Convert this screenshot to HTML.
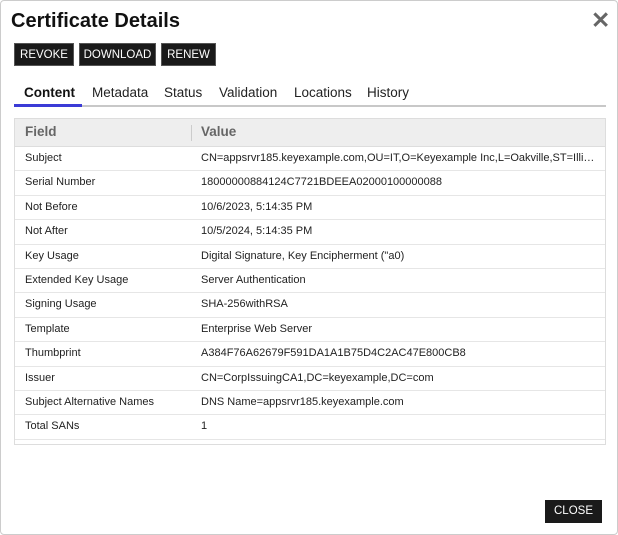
<!DOCTYPE html>
<html><head><style>
body{margin:0;width:618px;height:535px;background:#fff;font-family:"Liberation Sans",Arial,sans-serif;overflow:hidden}
.dlg{position:absolute;left:0;top:0;width:616px;height:533px;border:1px solid #ccc;border-radius:4px;background:#fff}
h1{position:absolute;left:10px;top:9px;margin:0;font-size:20px;font-weight:bold;color:#111}
.x{position:absolute;left:590px;top:6px;font-size:23px;font-weight:bold;color:#666}
.btn{position:absolute;top:42px;height:23px;background:#1a1a1a;color:#fff;font-size:11.5px;line-height:23px;text-align:center;border:1px solid #555;box-sizing:border-box}
.tabs{position:absolute;left:13px;top:82px;width:592px;height:22px;border-bottom:2px solid #c8c8c8}
.tab{position:absolute;top:2px;font-size:13.5px;color:#222}
.tab.on{font-weight:bold;color:#111}
.ul{position:absolute;left:0;top:21px;width:68px;height:3px;background:#3b3bd6}
.tbl{position:absolute;left:13px;top:117px;width:590px;height:325px;border:1px solid #ddd;overflow:hidden}
.hd{height:27px;background:#eeeeee;border-bottom:1px solid #ddd;position:relative;font-size:13.5px;color:#666;font-weight:bold}
.row{height:23.4px;border-bottom:1px solid #e6e6e6;position:relative;font-size:11px;color:#222;line-height:23.4px}
.c1{position:absolute;left:10px}
.c2{position:absolute;left:186px;white-space:nowrap;width:394px;overflow:hidden;text-overflow:ellipsis}
.close{position:absolute;left:544px;top:499px;width:57px;height:23px;background:#1a1a1a;color:#fff;font-size:11.5px;line-height:23px;text-align:center}
</style></head><body><div class="dlg">
<h1>Certificate Details</h1>
<div class="x">✕</div>
<div class="btn" style="left:13px;width:60px">REVOKE</div>
<div class="btn" style="left:78px;width:77px">DOWNLOAD</div>
<div class="btn" style="left:160px;width:55px">RENEW</div>
<div class="tabs">
<span class="tab on" style="left:10px">Content</span>
<span class="tab" style="left:78px">Metadata</span>
<span class="tab" style="left:150px">Status</span>
<span class="tab" style="left:205px">Validation</span>
<span class="tab" style="left:280px">Locations</span>
<span class="tab" style="left:353px">History</span>
<div class="ul"></div></div>
<div class="tbl">
<div class="hd"><span class="c1" style="top:5px">Field</span><span style="position:absolute;left:176px;top:6px;height:16px;border-left:1px solid #ccc"></span><span class="c2" style="top:5px">Value</span></div>
<div class="row"><span class="c1">Subject</span><span class="c2">CN=appsrvr185.keyexample.com,OU=IT,O=Keyexample Inc,L=Oakville,ST=Illinois,C=US</span></div>
<div class="row"><span class="c1">Serial Number</span><span class="c2">18000000884124C7721BDEEA02000100000088</span></div>
<div class="row"><span class="c1">Not Before</span><span class="c2">10/6/2023, 5:14:35 PM</span></div>
<div class="row"><span class="c1">Not After</span><span class="c2">10/5/2024, 5:14:35 PM</span></div>
<div class="row"><span class="c1">Key Usage</span><span class="c2">Digital Signature, Key Encipherment ("a0)</span></div>
<div class="row"><span class="c1">Extended Key Usage</span><span class="c2">Server Authentication</span></div>
<div class="row"><span class="c1">Signing Usage</span><span class="c2">SHA-256withRSA</span></div>
<div class="row"><span class="c1">Template</span><span class="c2">Enterprise Web Server</span></div>
<div class="row"><span class="c1">Thumbprint</span><span class="c2">A384F76A62679F591DA1A1B75D4C2AC47E800CB8</span></div>
<div class="row"><span class="c1">Issuer</span><span class="c2">CN=CorpIssuingCA1,DC=keyexample,DC=com</span></div>
<div class="row"><span class="c1">Subject Alternative Names</span><span class="c2">DNS Name=appsrvr185.keyexample.com</span></div>
<div class="row"><span class="c1">Total SANs</span><span class="c2">1</span></div>
</div>
<div class="close">CLOSE</div>
</div></body></html>
